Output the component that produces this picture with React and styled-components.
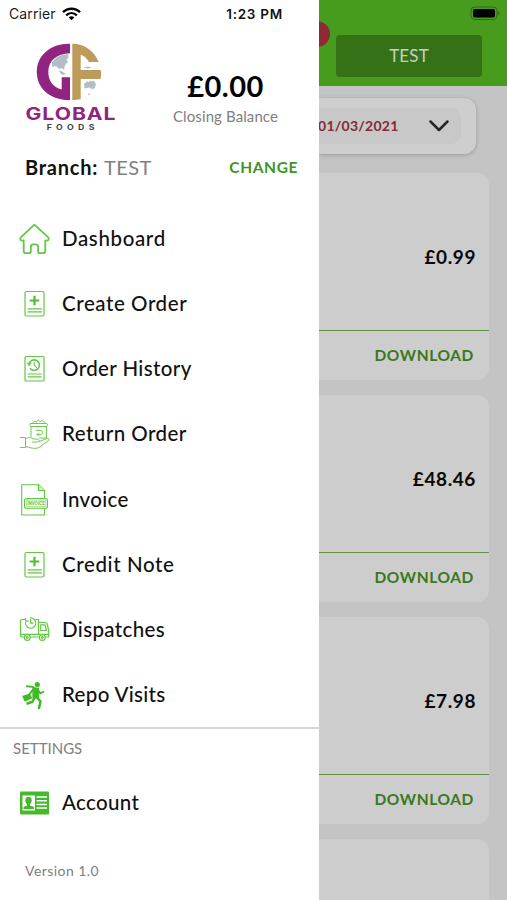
import React from "react";
import styled, { createGlobalStyle } from "styled-components";

const GlobalStyle = createGlobalStyle`
  *, *::before, *::after { box-sizing: border-box; }
  body { margin: 0; background: #c4c4c4; }
`;

const Screen = styled.div`
  display: flex;
  width: 507px;
  height: 900px;
  overflow: hidden;
  font-family: Lato, "Open Sans", sans-serif;
  color: #111;
`;

/* ---------- drawer ---------- */

const Drawer = styled.aside`
  display: flex;
  flex-direction: column;
  flex: 0 0 319px;
  background: #fff;
`;

const StatusBar = styled.div`
  display: flex;
  align-items: center;
  height: 27px;
  padding: 0 36px 0 9px;
  font-family: Inter, sans-serif;
`;

const Carrier = styled.span`
  margin-right: 6px;
  font-size: 14px;
  letter-spacing: 0.1px;
  color: #1c1c1c;
`;

const Clock = styled.span`
  margin-left: auto;
  font-size: 13.5px;
  font-weight: 600;
  letter-spacing: 0.75px;
`;

const Profile = styled.header`
  display: flex;
  height: 110px;
  margin-top: 1px;
`;

const LogoSvg = styled.svg`
  flex: none;
  width: 132px;
  height: 110px;
`;

const Balance = styled.div`
  display: flex;
  flex-direction: column;
  align-items: center;
  width: 187px;
  padding-top: 40px;
`;

const BalanceAmount = styled.strong`
  font-size: 29px;
  line-height: 36px;
  font-weight: 700;
  letter-spacing: 0.5px;
  color: #000;
`;

const BalanceLabel = styled.span`
  margin-top: 3px;
  font-size: 15px;
  line-height: 18px;
  letter-spacing: 0.1px;
  color: #808080;
`;

const BranchRow = styled.div`
  display: flex;
  align-items: center;
  height: 57px;
  padding: 0 21px 0 25px;
`;

const BranchLabel = styled.strong`
  font-size: 20px;
  font-weight: 700;
  letter-spacing: 0.75px;
`;

const BranchName = styled.span`
  margin-left: 6px;
  font-size: 20px;
  letter-spacing: 0.4px;
  color: #808080;
`;

const TextButton = styled.button`
  margin: 0;
  padding: 0;
  border: 0;
  background: none;
  font: 700 15.5px/20px Lato, sans-serif;
  letter-spacing: 0.6px;
  color: ${(p) => p.$color};
`;

const ChangeButton = styled(TextButton)`
  margin-left: auto;
`;

const Nav = styled.nav`
  display: flex;
  flex-direction: column;
  height: 522px;
  margin-top: 10px;
`;

const MenuItem = styled.a`
  display: flex;
  flex: 1 1 0;
  align-items: center;
  padding-left: 17px;
`;

const MenuIcon = styled.svg`
  flex: none;
  width: 36px;
  height: 36px;
  margin-right: 9px;
  fill: none;
  stroke: #62c744;
  stroke-width: ${(p) => p.$weight || 1.2};
  stroke-linecap: round;
  stroke-linejoin: round;
`;

const MenuLabel = styled.span`
  font-size: 20.5px;
  font-weight: 500;
  letter-spacing: ${(p) => p.$track}px;
  white-space: nowrap;
`;

const Settings = styled.section`
  display: flex;
  flex-direction: column;
  border-top: 2px solid #d4d4d4;
`;

const SettingsTitle = styled.h2`
  margin: 10px 0 0 13px;
  font-size: 15px;
  line-height: 18px;
  font-weight: 400;
  color: #808080;
`;

const SettingsItem = styled(MenuItem)`
  flex: none;
  height: 65px;
  margin-top: 12px;
`;

const Version = styled.span`
  margin: 28px 0 0 25px;
  font-size: 14px;
  line-height: 18px;
  letter-spacing: 0.45px;
  color: #808080;
`;

/* ---------- dimmed page behind the drawer ---------- */

const Page = styled.main`
  flex: 1;
  min-width: 0;
  overflow: hidden;
  background: #c4c4c4;
`;

const PageHeader = styled.header`
  position: relative;
  height: 86px;
  padding: 6px 6px 0 17px;
  background: #489c1d;
`;

const BatterySvg = styled.svg`
  display: block;
  width: 32px;
  height: 15px;
  margin-left: auto;
`;

const Badge = styled.span`
  position: absolute;
  top: 21px;
  left: -15px;
  width: 26px;
  height: 26px;
  border-radius: 50%;
  background: #8d2a34;
`;

const BranchButton = styled.button`
  display: block;
  width: 146px;
  height: 42px;
  margin: 14px 0 0;
  padding: 0 0 1px;
  border: 0;
  border-radius: 4px;
  background: #357217;
  font: 400 17px/20px Lato, sans-serif;
  letter-spacing: 0.15px;
  color: #c9cfc5;
`;

const FilterCard = styled.div`
  width: 157px;
  height: 56px;
  margin-top: 12px;
  padding: 10px 15px 10px 0;
  border-radius: 0 12px 12px 0;
  background: #cecece;
  box-shadow: 0 1px 4px rgba(0, 0, 0, 0.22);
`;

const DateSelect = styled.div`
  display: flex;
  align-items: center;
  justify-content: space-between;
  height: 36px;
  padding-right: 11px;
  border-radius: 0 10px 10px 0;
  background: #c8c8c8;
`;

const DateValue = styled.span`
  margin: -2px 0 0 -1px;
  font-size: 14px;
  font-weight: 700;
  letter-spacing: 0.26px;
  color: #842b35;
`;

const ChevronSvg = styled.svg`
  width: 22px;
  height: 14px;
  fill: none;
  stroke: #262626;
  stroke-width: 2.5;
  stroke-linecap: round;
  stroke-linejoin: round;
`;

const CardList = styled.div`
  display: flex;
  flex-direction: column;
  gap: 15px;
  width: 170px;
  margin-top: 19px;
`;

const Card = styled.article`
  display: flex;
  flex: none;
  flex-direction: column;
  height: 207px;
  border-radius: 0 12px 12px 0;
  background: #cdcdcd;
`;

const Amount = styled.div`
  display: flex;
  align-items: center;
  justify-content: flex-end;
  height: 158px;
  padding: 9px 13px 0 0;
  border-bottom: 1.5px solid #5f9142;
  font-size: 19px;
  font-weight: 700;
  letter-spacing: 0.6px;
  color: #080808;
`;

const CardFooter = styled.footer`
  display: flex;
  flex: 1;
  align-items: center;
  justify-content: flex-end;
  padding: 0 15px 2px 0;
`;

/* ---------- icons ---------- */

const Logo = () => (
  <LogoSvg viewBox="0 28 132 110">
    <g fill="#b3bdc5">
      <path d="M52 62l5-5 5-2 6-1 .5 4-2 1 1.500 3-3 3-1 5-2-2-3 1-3-3-4 1z" />
      <path d="M59 70l4 2 3 2-3 1-3-2z" />
      <path d="M83 67.500l5-1 4 1-4 1z" />
      <path d="M84 84l3-2.500 2 .5 1-1.500 2 1 2-1 2 4-1.500 4-3 .5-2-1.500-5 1z" />
      <path d="M88 94l2-1-1 3z" />
    </g>
    <path fill="#902480" d="M70 43.700C51 43.200 36.800 55 36.800 72S51 100.500 70 100V77.300H61.700V89.500C53 87.500 48.300 80.500 48.300 72C48.300 60.500 57 53.400 70 53.200Z" />
    <path fill="#bd9b5b" d="M72.300 43.700C84.500 43.900 94 50.500 98.700 62H89C86.500 58 84 56 80.700 54.800V70H100.700C101.300 73 101.200 76 100.500 79H80.700V99C78 99.800 75 100 72.300 100Z" />
    <text x="25.500" y="120" textLength="91" lengthAdjust="spacingAndGlyphs" fontFamily="Inter, sans-serif" fontSize="17.500" fontWeight="700" letterSpacing=".8" fill="#902480">GLOBAL</text>
    <text x="46.700" y="129.800" textLength="52" lengthAdjust="spacingAndGlyphs" fontFamily="Inter, sans-serif" fontSize="7.300" fontWeight="700" letterSpacing="3.600" fill="#444">FOODS</text>
  </LogoSvg>
);

const Wifi = () => (
  <svg width="19" height="14" viewBox="0 0 19 14" fill="none" stroke="#000" strokeWidth="2.400">
    <path d="M1 5.200C5.700.6 13.300.6 18 5.200" />
    <path d="M4.200 8.300C7.300 5.400 11.700 5.400 14.800 8.300" />
    <path d="M9.500 13.200L6.700 10.400C8.300 9 10.700 9 12.300 10.400Z" fill="#000" stroke="none" />
  </svg>
);

const Battery = () => (
  <BatterySvg viewBox="0 0 32 15">
    <rect x="2" y="1" width="26" height="12.500" rx="3.500" fill="none" stroke="#2f6813" strokeWidth="1" />
    <rect x="4" y="3" width="22" height="8.500" rx="1.800" fill="#000" />
    <path d="M29.300 5.200C30.800 5.800 30.800 8.700 29.300 9.300Z" fill="#2f6813" />
  </BatterySvg>
);

const HomeIcon = () => (
  <MenuIcon viewBox="0 0 36 36" $weight={1.8}>
    <path d="M17.400 4.600L4 17.100C2.200 19 3.500 21.200 6.700 20.500V31C6.700 32.500 7.400 33.200 8.800 33.200H12.200C13.300 33.200 13.800 32.600 13.800 31.500V27C13.800 25.300 14.700 24.400 16.200 24.400H18.700C20.200 24.400 21.100 25.300 21.100 27V31.500C21.100 32.600 21.600 33.200 22.700 33.200H26.200C27.600 33.200 28.300 32.500 28.300 31V20.500C31.500 21.200 32.800 19 31 17.100Z" />
  </MenuIcon>
);

const PlusDocIcon = () => (
  <MenuIcon viewBox="0 0 36 36">
    <rect x="8" y="6.500" width="19" height="24.500" rx="1.500" />
    <path d="M17.500 10.800V20.200M12.700 15.500H22.300" stroke="#52bf32" strokeWidth="2.200" strokeLinecap="butt" />
    <path d="M11 23.800H24.500M11 26.800H24.500" />
  </MenuIcon>
);

const HistoryIcon = () => (
  <MenuIcon viewBox="0 0 36 36">
    <rect x="8" y="6.500" width="19" height="24.500" rx="1" />
    <path d="M12.300 13.500A5.200 5.200 0 1 1 13.500 18.700" strokeWidth="1.600" />
    <path d="M10.500 12.800L14.300 13.200L12 15.800Z" fill="#62c744" strokeWidth=".5" />
    <path d="M17.200 12.500V15.200L19.500 17.300" strokeWidth="1.100" />
    <path d="M11.200 24H24.200M11.200 26.800H24.200" />
  </MenuIcon>
);

const ReturnIcon = () => (
  <MenuIcon viewBox="0 0 36 36" $weight={0.95}>
    <path d="M14 21.500V11.500M29.500 11.500V23H22.500" />
    <rect x="13" y="8.500" width="17.300" height="3" rx=".7" />
    <path d="M16 8.300C16.500 6 18.500 5.500 19.500 7.500C19.500 4.800 22.500 4.300 23.300 7C24.500 4.500 27.500 5.500 27.500 8.300" />
    <path d="M19.500 15.500H23.500C26.300 15.500 26.300 19.500 23.500 19.500H20.500M21.500 18L20 19.500L21.500 21" />
    <path d="M3.500 22.500H8.500V32.500H3.500M8.500 24C11 22 14 22 16 23.800L20.500 24.200C23 24.700 22.500 27 20.500 27H15.500" />
    <path d="M22.500 26.500L29.500 23.500C31.500 22.800 33 24.200 31.500 25.500L22 32.500C18 34.500 13 32.500 8.500 31.500" />
  </MenuIcon>
);

const InvoiceIcon = () => (
  <MenuIcon viewBox="0 0 36 36" $weight={1.1}>
    <path d="M27.500 17V9.500L21.500 3.700H4.700V34H27.500V27.500" />
    <path d="M21.500 3.700V9.500H27.500" fill="#d9f2d0" />
    <rect x="7.500" y="17.500" width="23" height="9.700" rx="2" fill="#fff" />
    <rect x="9.200" y="19" width="19.600" height="6.700" rx=".9" strokeWidth=".6" />
    <text x="10.200" y="24.200" textLength="17.600" lengthAdjust="spacingAndGlyphs" fontFamily="Inter, sans-serif" fontSize="5.200" fontWeight="700" fill="#5cc43c" stroke="none">INVOICE</text>
  </MenuIcon>
);

const TruckIcon = () => (
  <MenuIcon viewBox="0 0 36 36" $weight={1.2}>
    <path d="M8 8.500H5.500Q3.500 8.500 3.500 10.500V24Q3.500 26 5.500 26H7M13.500 26H21.500M18.800 8.500H21.500V23.300M4.500 23.300H21.500" />
    <path d="M9.200 9.500A5.100 5.100 0 1 0 17 8.200Q15.500 6.800 13.500 6.800M13.500 8.500V12.200H16M8.300 7.500L9.200 10H11.500" />
    <path d="M21.500 11.500H28.500Q29.700 11.500 30.100 12.700L31.700 19.500V26H28.500M23.700 13.800H28.200L29.500 19.500H23.700ZM21.500 23.300H31.700" />
    <circle cx="10.300" cy="26.500" r="2.900" fill="#fff" /><circle cx="10.300" cy="26.500" r=".8" />
    <circle cx="25.300" cy="26.500" r="2.900" fill="#fff" /><circle cx="25.300" cy="26.500" r=".8" />
  </MenuIcon>
);

const RunnerIcon = () => (
  <MenuIcon viewBox="0 0 36 36" $weight={2.5}>
    <g stroke="#42b928">
      <circle cx="20.300" cy="8.500" r="2.600" fill="#42b928" stroke="none" />
      <path d="M9.800 10.300L15.500 10.900L19 12.800" strokeWidth="1.900" />
      <path d="M16 12.800L21.300 12.300L21.500 21.300L16.200 22.300Z" fill="#42b928" strokeWidth="1.500" />
      <path d="M21 14L23.500 17.500L26.200 15.800" strokeWidth="1.900" />
      <path d="M17.300 22.300L15.500 25.800L10.500 27.500M20 21.500L23.500 25.300L22 32" />
      <path d="M16 13.500L12.500 18" strokeWidth="2" />
      <path d="M6 20.300L12.500 18.300L14.500 22L8 24.800Z" fill="#42b928" strokeWidth="1.300" />
    </g>
  </MenuIcon>
);

const AccountIcon = () => (
  <MenuIcon viewBox="0 0 36 36">
    <g stroke="none">
      <rect x="3" y="7.500" width="29" height="23" rx=".8" fill="#44b92a" />
      <rect x="5.500" y="11.500" width="12.500" height="15" fill="#fff" />
      <ellipse cx="11.500" cy="16.500" rx="3.200" ry="3.700" fill="#44b92a" />
      <path d="M10 19H13V21.500L17 23V25H6.500V23L10 21.500Z" fill="#44b92a" />
    </g>
    <path d="M19.500 13H30M19.500 16.700H30M19.500 20.400H30M19.500 24.100H30" stroke="#fff" strokeWidth="1.500" strokeLinecap="butt" />
  </MenuIcon>
);

const MENU = [
  { label: "Dashboard", track: 0.64, Icon: HomeIcon },
  { label: "Create Order", track: 0.57, Icon: PlusDocIcon },
  { label: "Order History", track: 0.39, Icon: HistoryIcon },
  { label: "Return Order", track: 0.45, Icon: ReturnIcon },
  { label: "Invoice", track: 0.33, Icon: InvoiceIcon },
  { label: "Credit Note", track: 0.61, Icon: PlusDocIcon },
  { label: "Dispatches", track: 0.37, Icon: TruckIcon },
  { label: "Repo Visits", track: 0.33, Icon: RunnerIcon },
];

const AMOUNTS = ["£0.99", "£48.46", "£7.98"];

export default function App() {
  return (
    <>
      <GlobalStyle />
      <Screen>
        <Drawer>
          <StatusBar>
            <Carrier>Carrier</Carrier>
            <Wifi />
            <Clock>1:23 PM</Clock>
          </StatusBar>
          <Profile>
            <Logo />
            <Balance>
              <BalanceAmount>£0.00</BalanceAmount>
              <BalanceLabel>Closing Balance</BalanceLabel>
            </Balance>
          </Profile>
          <BranchRow>
            <BranchLabel>Branch:</BranchLabel>
            <BranchName>TEST</BranchName>
            <ChangeButton $color="#3f9424">CHANGE</ChangeButton>
          </BranchRow>
          <Nav>
            {MENU.map(({ label, track, Icon }) => (
              <MenuItem key={label}>
                <Icon />
                <MenuLabel $track={track}>{label}</MenuLabel>
              </MenuItem>
            ))}
          </Nav>
          <Settings>
            <SettingsTitle>SETTINGS</SettingsTitle>
            <SettingsItem>
              <AccountIcon />
              <MenuLabel $track={0.35}>Account</MenuLabel>
            </SettingsItem>
            <Version>Version 1.0</Version>
          </Settings>
        </Drawer>
        <Page>
          <PageHeader>
            <Battery />
            <Badge />
            <BranchButton>TEST</BranchButton>
          </PageHeader>
          <FilterCard>
            <DateSelect>
              <DateValue>01/03/2021</DateValue>
              <ChevronSvg viewBox="0 0 22 14">
                <path d="M2.500 2.500L11 11L19.500 2.500" />
              </ChevronSvg>
            </DateSelect>
          </FilterCard>
          <CardList>
            {AMOUNTS.map((amount) => (
              <Card key={amount}>
                <Amount>{amount}</Amount>
                <CardFooter>
                  <TextButton $color="#38791d">DOWNLOAD</TextButton>
                </CardFooter>
              </Card>
            ))}
            <Card />
          </CardList>
        </Page>
      </Screen>
    </>
  );
}
